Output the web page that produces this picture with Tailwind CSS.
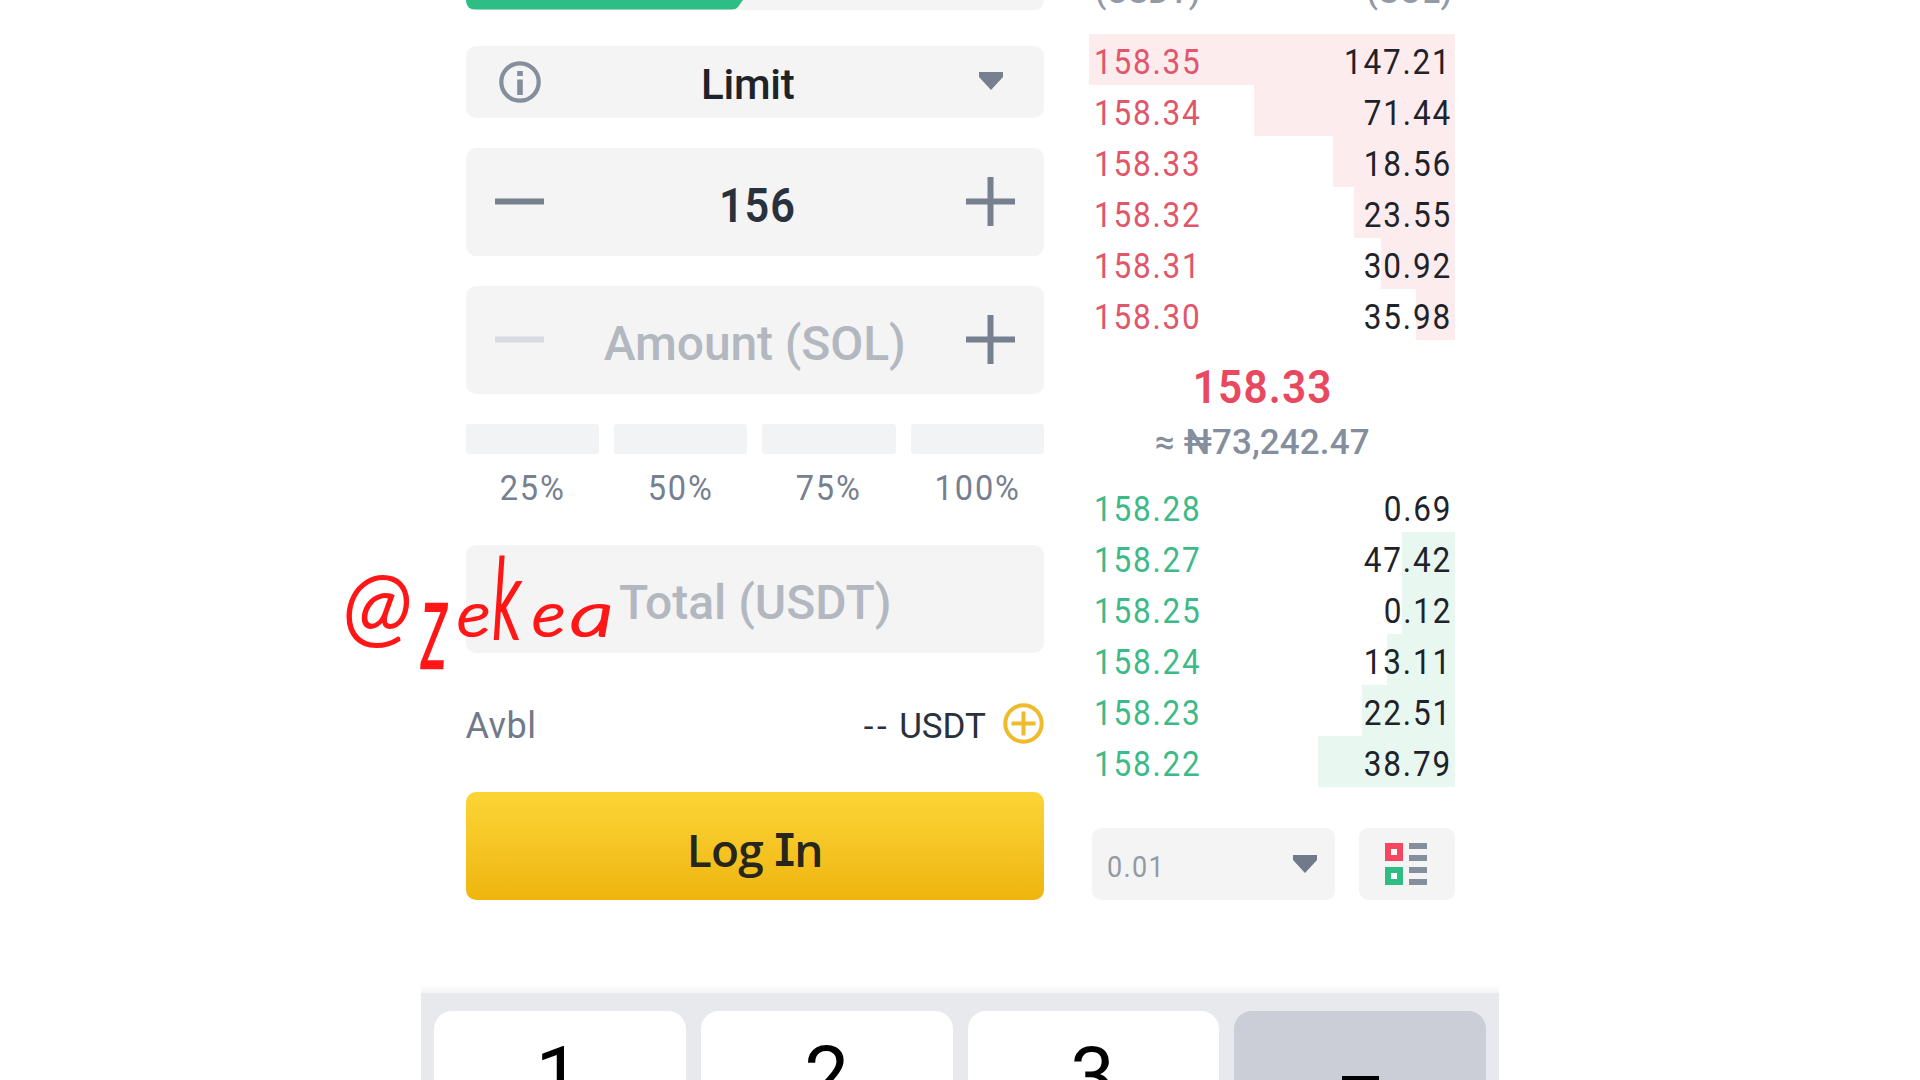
<!DOCTYPE html>
<html lang="en">
<head>
<meta charset="utf-8">
<title>SOL/USDT</title>
<script src="https://cdn.jsdelivr.net/npm/@tailwindcss/browser@4"></script>
</head>
<body class="bg-white">
<main class="relative h-[1080px] w-[1920px] overflow-hidden bg-white font-[Roboto,sans-serif] leading-none">
  <div class="ml-[421px] flex h-[1080px] w-[1078px] flex-col">
    <div class="flex h-[993px] shrink-0 gap-[45px] overflow-hidden bg-linear-to-t from-[#f4f4f5] to-white to-[9px] pl-[44.5px]">
      <!-- Order form -->
      <section class="flex w-[578.5px] flex-col">
        <div class="h-[9.5px] shrink-0 overflow-hidden rounded-b-[9px] bg-[#f4f4f4]">
          <svg class="block h-[10px] w-[280px]" viewBox="0 0 280 10"><path d="M0 0H277L272 7Q270 9.5 266 9.5H0Z" fill="#2ebd85"/></svg>
        </div>
        <div class="mt-[36px] flex h-[72px] items-center justify-between rounded-[10px] bg-[#f4f4f4] px-[33px]">
          <svg class="h-[42px] w-[42px]" viewBox="0 0 42 42" fill="none"><circle cx="21" cy="21" r="18.7" stroke="#848e9c" stroke-width="4.2"/><path d="M18.2 10h5.6v5h-5.6zM18.2 18.5h5.6V34h-5.6z" fill="#848e9c"/></svg>
          <span class="mr-[24px] pt-[7px] text-[42px] font-medium tracking-[-0.2px] text-[#1e2329]">Limit</span>
          <svg class="mr-[8px] mb-[2px] h-[18px] w-[24px]" viewBox="0 0 24 18"><path d="M0 0H24V5L12 18L0 5Z" fill="#76808f"/></svg>
        </div>
        <div class="mt-[30px] flex h-[108px] items-center justify-between rounded-[10px] bg-[#f4f4f4] px-[29px]">
          <svg class="h-[49px] w-[49px]" viewBox="0 0 49 49"><path d="M0 21.5h49v6H0z" fill="#76808f"/></svg>
          <span class="scale-x-90 pt-[9px] pl-[5px] text-[48px] font-semibold tracking-[1px] text-[#29313d]">156</span>
          <svg class="h-[49px] w-[49px]" viewBox="0 0 49 49"><path d="M0 21.5h49v6H0zM21.5 0h6v49h-6z" fill="#76808f"/></svg>
        </div>
        <div class="mt-[30px] flex h-[108px] items-center justify-between rounded-[10px] bg-[#f4f4f4] px-[29px]">
          <svg class="h-[49px] w-[49px]" viewBox="0 0 49 49"><path d="M0 21.5h49v6H0z" fill="#d6dbe1"/></svg>
          <span class="pt-[8px] text-[48px] font-medium tracking-[-0.1px] text-[#b3b8c0]">Amount (SOL)</span>
          <svg class="h-[49px] w-[49px]" viewBox="0 0 49 49"><path d="M0 21.5h49v6H0zM21.5 0h6v49h-6z" fill="#76808f"/></svg>
        </div>
        <div class="mt-[30px] grid grid-cols-4 gap-x-[15px] text-center text-[35px] text-[#76808f]">
          <div><div class="mb-[17.5px] h-[30px] rounded-[3px] bg-[#f2f3f5]"></div><div class="scale-x-[.93] tracking-[2px]">25%</div></div>
          <div><div class="mb-[17.5px] h-[30px] rounded-[3px] bg-[#f2f3f5]"></div><div class="scale-x-[.93] tracking-[2px]">50%</div></div>
          <div><div class="mb-[17.5px] h-[30px] rounded-[3px] bg-[#f2f3f5]"></div><div class="scale-x-[.93] tracking-[2px]">75%</div></div>
          <div><div class="mb-[17.5px] h-[30px] rounded-[3px] bg-[#f2f3f5]"></div><div class="scale-x-[.93] tracking-[2px]">100%</div></div>
        </div>
        <div class="mt-[39px] flex h-[108px] items-center justify-center rounded-[10px] bg-[#f4f4f4] pt-[8px] pl-[1px] text-[48px] font-medium text-[#b3b8c0]">Total (USDT)</div>
        <div class="mt-[49.5px] flex h-[42px] items-center text-[36px]">
          <span class="pt-[5px] tracking-[0.5px] text-[#707a8a]">Avbl</span>
          <span class="mr-[9px] ml-auto pt-[5px] text-[35px] tracking-[3.5px] text-[#29313d]">--</span>
          <span class="pt-[5px] text-[35px] text-[#29313d]">USDT</span>
          <svg class="ml-[17px] h-[41px] w-[41px]" viewBox="0 0 41 41" fill="none" stroke="#edbb2b" stroke-width="4"><circle cx="20.5" cy="20.5" r="18.2"/><path d="M8.5 20.5h24M20.5 8.5v24"/></svg>
        </div>
        <div class="mt-[47.5px] flex h-[108px] items-center justify-center rounded-[10px] bg-linear-to-b from-[#fcd535] to-[#eeb50c] pt-[5px] font-['Open_Sans',sans-serif] text-[46px] font-semibold tracking-[-0.8px] whitespace-pre text-[#26261c]">Log <span class="relative top-[1px] font-[Inter,sans-serif] text-[45px] [font-feature-settings:'cv08']">I</span>n</div>
      </section>

      <!-- Order book -->
      <section class="flex w-[365.5px] flex-col text-[35px]">
        <div class="flex h-[33.5px] shrink-0 items-start justify-between pr-[2px] pl-[6px] text-[33px] font-medium text-[#929aa5]">
          <span class="-mt-[25px]">(USDT)</span><span class="-mt-[25px] tracking-[0.5px]">(SOL)</span>
        </div>
        <div id="asks"></div>
        <div class="mt-[23.5px] text-center text-[47px] font-semibold text-[#e9495f]"><span class="relative -left-[9px] inline-block scale-x-90 tracking-[1.3px]">158.33</span></div>
        <div class="mt-[15px] h-[55.5px] text-center font-medium text-[#848e9c]"><span class="relative -left-[9.5px] tracking-[0.1px]">≈ ₦73,242.47</span></div>
        <div id="bids"></div>
        <div class="mt-[41.5px] flex h-[72px] justify-between pl-[3px]">
          <div class="flex w-[243px] items-center justify-between rounded-[9px] bg-[#f4f4f4] pr-[18px] pl-[15px]">
            <span class="origin-left scale-x-90 pt-[6px] text-[30px] tracking-[1.5px] text-[#929aa5]">0.01</span>
            <svg class="mb-[1px] h-[18px] w-[24px]" viewBox="0 0 24 18"><path d="M0 0H24V5L12 18L0 5Z" fill="#707a8a"/></svg>
          </div>
          <div class="flex w-[96px] items-center justify-center rounded-[9px] bg-[#f4f4f4]">
            <svg class="h-[43px] w-[43px]" viewBox="0 0 43 43"><path d="M0 0h18v18H0zM6 6v6h6V6z" fill="#f6465d" fill-rule="evenodd"/><path d="M0 24h18v18H0zM6 30v6h6v-6z" fill="#2ebd85" fill-rule="evenodd"/><path d="M24 0h18v6H24zM24 12h18v6H24zM24 24h18v6H24zM24 36h18v6H24z" fill="#848e9c"/><path d="M6 6h6v6H6zM6 30h6v6H6z" fill="#fff"/></svg>
          </div>
        </div>
      </section>
    </div>

    <!-- Numeric keyboard -->
    <div class="grid h-[87px] shrink-0 grid-cols-4 gap-x-[15px] overflow-hidden bg-[#e8e9ed] px-[13px] pt-[18px] text-center text-[80px] text-black">
      <div class="h-[120px] rounded-[18px] bg-white pt-[25px] pr-[4px]">1</div>
      <div class="h-[120px] rounded-[18px] bg-white pt-[25px]">2</div>
      <div class="h-[120px] rounded-[18px] bg-white pt-[25px] pr-[2px]">3</div>
      <div class="flex h-[120px] justify-center rounded-[18px] bg-[#cbced6] pt-[64.5px]"><div class="h-[7px] w-[37px] bg-black"></div></div>
    </div>
  </div>

  <!-- Handle laid over the form -->
  <div class="absolute top-[556px] left-[343px] flex items-baseline font-[Lato,sans-serif] text-[62px] font-light whitespace-nowrap text-[#ff1616] italic [-webkit-text-stroke:2.2px_#ff1616]">
    <span class="mr-[10px] text-[90px]">@</span><span class="mr-[10px] origin-[50%_38%] scale-y-[2]">z</span><span class="mr-[6px] origin-left scale-x-[1.15]">e</span><span class="mr-[12px] origin-[50%_84%] scale-y-[1.8]">k</span><span class="mr-[9px] origin-left scale-x-[1.15]">e</span><span class="origin-left scale-x-[1.4]">a</span>
  </div>
</main>
<script>
  const asks = [["158.35","147.21",365.5],["158.34","71.44",201],["158.33","18.56",121.5],["158.32","23.55",100.5],["158.31","30.92",73.5],["158.30","35.98",39]];
  const bids = [["158.28","0.69",0],["158.27","47.42",52.5],["158.25","0.12",52.5],["158.24","13.11",67.5],["158.23","22.51",93],["158.22","38.79",136.5]];
  const rows = (list, color, bar) => list.map(([price, size, depth]) =>
    `<div class="relative flex h-[51px] items-center justify-between pt-[6px] pr-[2.5px] pl-[4.5px] font-[450]">
      <div class="absolute inset-y-0 right-0 ${bar}" style="width:${depth}px"></div>
      <span class="relative origin-left scale-x-90 tracking-[2px] ${color}">${price}</span><span class="relative origin-right scale-x-90 tracking-[2px] text-[#1e2329]">${size}</span>
    </div>`).join("");
  document.getElementById("asks").innerHTML = rows(asks, "text-[#e0566a]", "bg-[#fdecee]");
  document.getElementById("bids").innerHTML = rows(bids, "text-[#3dba88]", "bg-[#e9f7f1]");
</script>
</body>
</html>
